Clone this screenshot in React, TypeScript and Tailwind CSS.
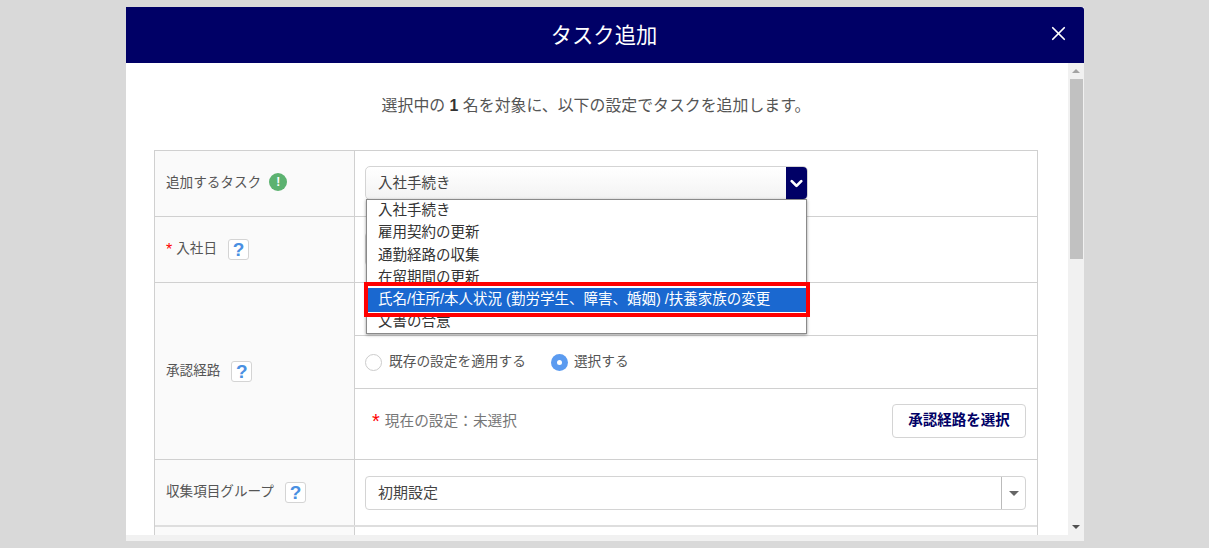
import { X, ChevronDown } from 'lucide-react';

const font = '[font-family:"Liberation_Sans","Noto_Sans_CJK_JP",sans-serif]';

function Help() {
  return (
    <span className="ml-[11px] inline-flex h-[21px] w-[21px] items-center justify-center rounded-[3px] border border-[#d4d4d4] bg-white text-[19px] font-bold leading-none text-[#4a90e2]">?</span>
  );
}

function Req({ big }: { big?: boolean }) {
  return <span className={big ? 'mr-[5px] text-[20px] leading-none text-[#f00]' : 'mr-[4px] text-[16px] leading-none text-[#f00]'}>*</span>;
}

function Label({ children, className }: { children: React.ReactNode; className?: string }) {
  return (
    <div className={`flex w-[200px] shrink-0 items-center border-r border-[#d0d0d0] bg-[#fafafa] pl-[11px] text-[13.6px] text-[#555] ${className ?? ''}`}>
      {children}
    </div>
  );
}

const options = ['入社手続き', '雇用契約の更新', '通勤経路の収集', '在留期間の更新'];

export default function App() {
  return (
    <div className={`${font} h-[548px] w-[1209px] overflow-hidden bg-[#d9d9d9] pl-[126px] pt-[7px]`}>
      <div className="flex h-[534px] w-[958px] flex-col overflow-hidden bg-white">
        <div className="relative flex h-[56px] shrink-0 items-center justify-center rounded-tr-[3px] bg-[#000066] pr-[2px] pt-[3px] text-[21.3px] text-white">
          タスク追加
          <X className="absolute right-[14px] top-[15px]" size={23} strokeWidth={1.8} />
        </div>
        <div className="flex min-h-0 flex-1">
          <div className="min-w-0 flex-1 overflow-hidden">
            <p className="mt-[33px] h-[54px] pr-[2px] text-center text-[15.9px] leading-[20px] text-[#555]">
              選択中の <b className="text-[#333]">1</b> 名を対象に、以下の設定でタスクを追加します。
            </p>
            <div className="ml-[28px] w-[884px] border border-[#d0d0d0]">
              <div className="flex h-[66px] border-b border-[#d0d0d0]">
                <Label className="pb-[1px]">
                  追加するタスク
                  <span className="ml-[8px] mb-[2px] flex h-[18px] w-[18px] items-center justify-center rounded-full bg-[#5cb270] text-[12px] font-bold text-white">!</span>
                </Label>
                <div className="relative flex-1 pl-[10px] pt-[15px]">
                  <div className="flex h-[34px] w-[443px] overflow-hidden rounded-[5px] border border-[#d4d4d4] bg-gradient-to-b from-white to-[#f3f3f3]">
                    <span className="flex-1 pl-[12px] text-[14.5px] leading-[32px] text-[#444]">入社手続き</span>
                    <span className="flex w-[21px] items-center justify-center bg-[#000066] text-white">
                      <ChevronDown size={19} strokeWidth={3.5} />
                    </span>
                  </div>
                  <div className="absolute left-[11px] top-[48px] z-10 h-[135px] w-[441px] overflow-hidden border border-[#8a8a8a] bg-white text-[14.5px] text-[#333] shadow-[0_1px_3px_rgba(0,0,0,0.4)]">
                    {options.map((o, i) => (
                      <div key={o} className={`pl-[11px] leading-[22.3px] ${i === 0 ? '-mt-[1px]' : ''}`}>{o}</div>
                    ))}
                    <div className="h-[24px] bg-[#1a68d0] pl-[11px] leading-[22px] text-white">
                      氏名/住所/本人状況 (勤労学生、障害、婚姻) /扶養家族の変更
                    </div>
                    <div className="-mt-[2px] pl-[11px] leading-[22px]">文書の合意</div>
                  </div>
                  <div className="absolute left-[9px] top-[131px] z-20 h-[35px] w-[446px] border-[4px] border-[#f00]" />
                </div>
              </div>
              <div className="flex h-[66px] border-b border-[#d0d0d0]">
                <Label><Req />入社日<Help /></Label>
                <div className="flex-1 pl-[10px] pt-[15px]">
                  <div className="h-[34px] w-[160px] rounded-[4px] border border-[#d4d4d4]" />
                </div>
              </div>
              <div className="flex h-[177px] border-b border-[#d0d0d0]">
                <Label>承認経路<Help /></Label>
                <div className="flex flex-1 flex-col">
                  <div className="h-[53px] border-b border-[#d0d0d0]" />
                  <div className="flex h-[53px] items-center border-b border-[#d0d0d0] pl-[10px] text-[13.7px] text-[#555]">
                    <span className="mr-[7px] h-[17px] w-[17px] rounded-full border border-[#ccc] bg-white" />
                    既存の設定を適用する
                    <span className="ml-[25px] mr-[6px] flex h-[17px] w-[17px] items-center justify-center rounded-full bg-[#5b9bf0]">
                      <span className="h-[5px] w-[5px] rounded-full bg-white" />
                    </span>
                    選択する
                  </div>
                  <div className="flex flex-1 items-center justify-between pb-[6px] pl-[17px] pr-[11px] text-[14.7px] text-[#777]">
                    <span className="flex items-center"><Req big />現在の設定：未選択</span>
                    <button className="h-[34px] w-[134px] rounded-[4px] border border-[#d4d4d4] bg-white text-[14.5px] font-bold text-[#000066]">承認経路を選択</button>
                  </div>
                </div>
              </div>
              <div className="flex h-[67px] border-b-2 border-[#dedede]">
                <Label>収集項目グループ<Help /></Label>
                <div className="flex-1 pl-[10px] pt-[16px]">
                  <div className="flex h-[34px] w-[661px] rounded-[4px] border border-[#d4d4d4] bg-white">
                    <span className="flex-1 pl-[12px] text-[15px] leading-[32px] text-[#444]">初期設定</span>
                    <span className="flex w-[24px] items-center justify-center border-l border-[#bbb]">
                      <span className="h-0 w-0 border-x-[5px] border-t-[5px] border-x-transparent border-t-[#666]" />
                    </span>
                  </div>
                </div>
              </div>
              <div className="flex h-[40px]">
                <Label> </Label>
              </div>
            </div>
          </div>
          <div className="flex w-[16px] shrink-0 flex-col items-center bg-[#f1f1f1]">
            <div className="flex h-[16px] w-full shrink-0 items-center justify-center">
              <span className="h-0 w-0 border-x-[4px] border-b-[4px] border-x-transparent border-b-[#a3a3a3]" />
            </div>
            <div className="h-[180px] w-[13px] shrink-0 bg-[#c1c1c1]" />
            <div className="flex-1" />
            <div className="flex h-[16px] w-full shrink-0 items-center justify-center">
              <span className="h-0 w-0 border-x-[4px] border-t-[4px] border-x-transparent border-t-[#505050]" />
            </div>
          </div>
        </div>
        <div className="h-[6px] shrink-0 bg-[#f1f1f1]" />
      </div>
    </div>
  );
}
